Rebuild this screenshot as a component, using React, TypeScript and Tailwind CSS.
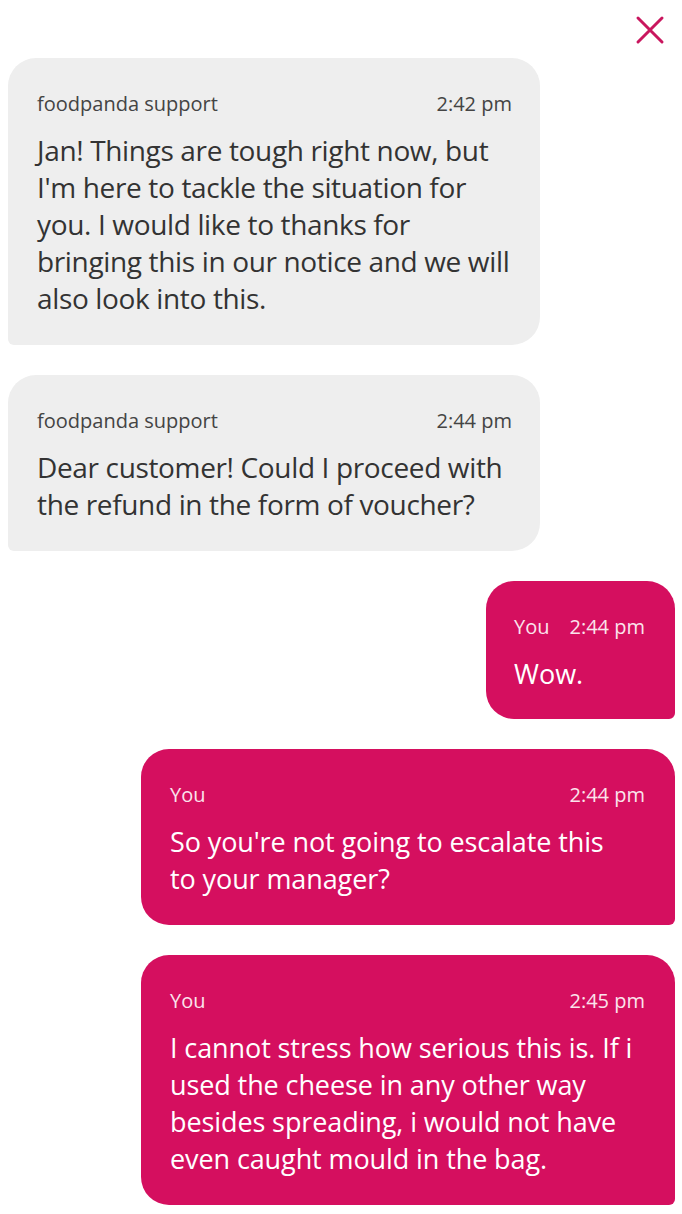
import React from "react";

const font = { fontFamily: '"Open Sans", "Noto Sans", sans-serif' };

function GrayBubble({ time, lines }: { time: string; lines: string }) {
  return (
    <div className="w-[532px] rounded-[28px] rounded-bl-[6px] bg-[#eeeeee] pl-[29px] pr-[20px] pt-[32px] pb-[28px]">
      <div className="mr-[8px] flex items-center justify-between text-[20px] leading-[28px] text-[#444444]">
        <span>foodpanda support</span>
        <span className="text-[20px]">{time}</span>
      </div>
      <p className="mt-[14px] text-[28px] leading-[37px] tracking-[-0.35px] text-[#333333]">{lines}</p>
    </div>
  );
}

function PinkBubble({ time, lines }: { time: string; lines: string }) {
  return (
    <div className="w-[534px] rounded-[28px] rounded-br-[6px] bg-[#d50f5f] pl-[29px] pr-[41px] pt-[32px] pb-[28px] text-white">
      <div className="-mr-[11px] flex items-center justify-between text-[20px] leading-[28px] text-[#fbe3ec]">
        <span>You</span>
        <span className="text-[20px]">{time}</span>
      </div>
      <p className="mt-[14px] text-[27px] leading-[37px] tracking-[-0.1px]">{lines}</p>
    </div>
  );
}

export default function App() {
  return (
    <div className="min-h-[1214px] w-[682px] bg-white" style={font}>
      <div className="flex h-[58px] items-start justify-end pr-[17px] pt-[15px]">
        <svg width="30" height="30" viewBox="0 0 30 30" aria-label="close">
          <path d="M3 3 L27 27 M27 3 L3 27" stroke="#c9165e" strokeWidth="3" strokeLinecap="round" />
        </svg>
      </div>
      <div className="flex flex-col gap-[30px] pl-[8px] pr-[7px]">
        <div className="flex justify-start">
          <GrayBubble
            time="2:42 pm"
            lines="Jan! Things are tough right now, but I'm here to tackle the situation for you. I would like to thanks for bringing this in our notice and we will also look into this."
          />
        </div>
        <div className="flex justify-start">
          <GrayBubble
            time="2:44 pm"
            lines="Dear customer! Could I proceed with the refund in the form of voucher?"
          />
        </div>
        <div className="flex justify-end">
          <div className="rounded-[28px] rounded-br-[6px] bg-[#d50f5f] pl-[28px] pr-[30px] pt-[32px] pb-[27px] text-white">
            <div className="flex items-center gap-[20px] text-[20px] leading-[28px] text-[#fbe3ec]">
              <span>You</span>
              <span>2:44 pm</span>
            </div>
            <p className="mt-[14px] text-[27px] leading-[37px]">Wow.</p>
          </div>
        </div>
        <div className="flex justify-end">
          <PinkBubble time="2:44 pm" lines="So you're not going to escalate this to your manager?" />
        </div>
        <div className="flex justify-end">
          <PinkBubble
            time="2:45 pm"
            lines="I cannot stress how serious this is. If i used the cheese in any other way besides spreading, i would not have even caught mould in the bag."
          />
        </div>
      </div>
    </div>
  );
}
